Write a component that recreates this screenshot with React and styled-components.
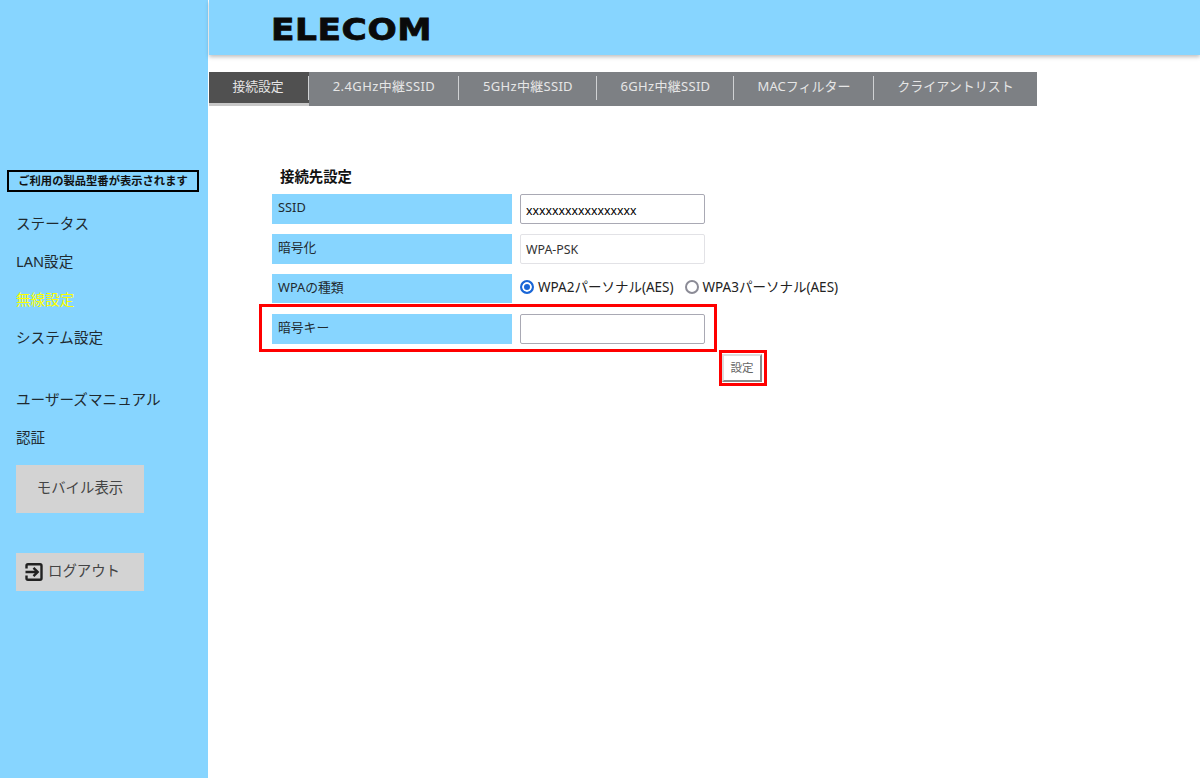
import React from "react";
import styled, { createGlobalStyle } from "styled-components";

const SKY = "#87d5ff";
const FONT = `"Noto Sans", "Noto Sans CJK JP", sans-serif`;

const GlobalStyle = createGlobalStyle`
  html, body {
    margin: 0;
    padding: 0;
    background: #fff;
    font-family: ${FONT};
  }
  * { box-sizing: border-box; }
`;

const tabs = [
  { label: "接続設定", width: 100, active: true },
  { label: "2.4GHz中継SSID", width: 150, spread: 0.4 },
  { label: "5GHz中継SSID", width: 138, spread: 0.3 },
  { label: "6GHz中継SSID", width: 137, spread: 0.3 },
  { label: "MACフィルター", width: 140 },
  { label: "クライアントリスト", width: 163, last: true },
];

function LogoutIcon() {
  return (
    <svg width="20" height="20" viewBox="0 0 20 20" fill="none" stroke="#222" strokeWidth="2.4">
      <path d="M2.500 6.500V3.800A1.500 1.500 0 0 1 4 2.300h12a1.500 1.500 0 0 1 1.500 1.500v12.400a1.500 1.500 0 0 1-1.500 1.500H4a1.500 1.500 0 0 1-1.500-1.500v-2.700" />
      <path d="M1.500 10h11.500M9.500 5.800 13.700 10l-4.200 4.200" />
    </svg>
  );
}

export default function App() {
  return (
    <Page>
      <GlobalStyle />
      <Sidebar>
        <ModelBox>ご利用の製品型番が表示されます</ModelBox>
        <NavList>
          <NavItem>ステータス</NavItem>
          <NavItem>LAN設定</NavItem>
          <NavItem $current>無線設定</NavItem>
          <NavItem>システム設定</NavItem>
        </NavList>
        <NavList $second>
          <NavItem>ユーザーズマニュアル</NavItem>
          <NavItem>認証</NavItem>
        </NavList>
        <MobileButton>モバイル表示</MobileButton>
        <LogoutButton>
          <LogoutIcon />
          <LogoutText>ログアウト</LogoutText>
        </LogoutButton>
      </Sidebar>

      <Main>
        <Header>
          <Logo>ELECOM</Logo>
        </Header>
        <TabBar>
          {tabs.map((tab) => (
            <Tab
              key={tab.label}
              $active={tab.active}
              $last={tab.last}
              $width={tab.width}
              $spread={tab.spread}
            >
              {tab.label}
            </Tab>
          ))}
        </TabBar>

        <Form>
          <FormTitle>接続先設定</FormTitle>
          <Row>
            <Label>SSID</Label>
            <TextInput defaultValue="xxxxxxxxxxxxxxxxx" />
          </Row>
          <Row>
            <Label>暗号化</Label>
            <ReadOnlyValue>WPA-PSK</ReadOnlyValue>
          </Row>
          <Row $short>
            <Label>WPAの種類</Label>
            <RadioGroup>
              <RadioDot $checked />
              <RadioText>WPA2パーソナル(AES)</RadioText>
              <RadioDot />
              <RadioText>WPA3パーソナル(AES)</RadioText>
            </RadioGroup>
          </Row>
          <Row>
            <Label>暗号キー</Label>
            <TextInput />
            <KeyHighlight />
          </Row>
          <SubmitRow>
            <SubmitButton>設定</SubmitButton>
            <SubmitHighlight />
          </SubmitRow>
        </Form>
      </Main>
    </Page>
  );
}

const Page = styled.div`
  display: flex;
  width: 1200px;
  height: 778px;
  overflow: hidden;
  background: #fff;
`;

const Sidebar = styled.aside`
  width: 208px;
  flex-shrink: 0;
  background: ${SKY};
  padding: 170px 0 0 16px;
  display: flex;
  flex-direction: column;
  align-items: flex-start;
`;

const ModelBox = styled.div`
  width: 192px;
  height: 22px;
  margin-left: -9px;
  border: 2px solid #000;
  font-size: 11.300px;
  font-weight: 700;
  line-height: 18px;
  text-align: center;
  white-space: nowrap;
  color: #111;
`;

const NavList = styled.div`
  margin-top: ${(p) => (p.$second ? "24px" : "12px")};
  display: flex;
  flex-direction: column;
`;

const NavItem = styled.div`
  height: 38px;
  line-height: 38px;
  font-size: 14.600px;
  white-space: nowrap;
  color: ${(p) => (p.$current ? "#ffff00" : "#1f2a30")};
`;

const MobileButton = styled.div`
  width: 128px;
  height: 48px;
  margin-top: 9px;
  background: #d3d3d3;
  color: #444;
  font-size: 14.400px;
  line-height: 46px;
  text-align: center;
`;

const LogoutButton = styled.div`
  width: 128px;
  height: 38px;
  margin-top: 40px;
  padding-left: 8px;
  background: #d3d3d3;
  color: #444;
  display: flex;
  align-items: center;
  gap: 4px;
`;

const LogoutText = styled.span`
  font-size: 14.400px;
  line-height: 35px;
  height: 38px;
`;

const Main = styled.main`
  flex: 1;
  min-width: 0;
  padding-left: 1px;
`;

const Header = styled.header`
  height: 55px;
  background: ${SKY};
  box-shadow: 0 2px 4px rgba(0, 0, 0, 0.25);
  padding-left: 62px;
  display: flex;
  align-items: center;
`;

const Logo = styled.div`
  font-family: "DejaVu Sans", sans-serif;
  font-size: 31px;
  font-weight: 700;
  line-height: 1;
  color: #0a0a0a;
  letter-spacing: 0.5px;
  -webkit-text-stroke: 0.8px #0a0a0a;
  transform: scale(1.11, 1);
  transform-origin: left center;
  margin-top: 3px;
`;

const TabBar = styled.nav`
  margin-top: 17px;
  width: 828px;
  height: 34px;
  display: flex;
  background: #7d8084;
`;

const Tab = styled.div`
  position: relative;
  width: ${(p) => p.$width}px;
  height: 34px;
  padding-right: ${(p) => (p.$active ? "2px" : "0")};
  background: ${(p) => (p.$active ? "#505050" : "transparent")};
  border-bottom: ${(p) => (p.$active ? "3px solid #c8c8c8" : "0")};
  color: #e6e6e6;
  font-size: ${(p) => (p.$active ? "12.800px" : "13px")};
  letter-spacing: ${(p) => p.$spread || 0}px;
  line-height: 29px;
  text-align: center;
  white-space: nowrap;

  &::after {
    content: "";
    display: ${(p) => (p.$last ? "none" : "block")};
    position: absolute;
    right: 0;
    top: 4px;
    height: 24px;
    width: 1px;
    background: #d0d2d4;
  }
`;

const Form = styled.section`
  position: relative;
  margin-top: 60px;
  padding-left: 63px;
`;

const FormTitle = styled.h2`
  margin: 0 0 7px 8px;
  height: 21px;
  font-size: 14.400px;
  font-weight: 700;
  line-height: 21px;
  color: #111;
`;

const Row = styled.div`
  position: relative;
  display: flex;
  align-items: flex-start;
  gap: 8px;
  height: ${(p) => (p.$short ? "29px" : "30px")};
  margin-bottom: ${(p) => (p.$short ? "11px" : "10px")};
`;

const Label = styled.div`
  width: 240px;
  height: 100%;
  padding-left: 6px;
  background: ${SKY};
  color: #1f2a30;
  font-size: 12.800px;
  line-height: 27px;
`;

const TextInput = styled.input`
  width: 185px;
  height: 30px;
  padding: 2px 5px 0;
  border: 1px solid #a9a9b4;
  border-radius: 2px;
  background: #fff;
  color: #000;
  font-family: ${FONT};
  font-size: 12.300px;
  outline: none;
`;

const ReadOnlyValue = styled.div`
  width: 185px;
  height: 30px;
  padding-left: 5px;
  border: 1px solid #e2e2e6;
  border-radius: 2px;
  color: #333;
  font-size: 12.400px;
  line-height: 29px;
`;

const RadioGroup = styled.div`
  display: flex;
  align-items: center;
  height: 26px;
`;

const RadioDot = styled.span`
  width: 14px;
  height: 14px;
  border-radius: 50%;
  border: 2px solid ${(p) => (p.$checked ? "#1a66d6" : "#8b8b96")};
  background: ${(p) => (p.$checked ? "#1a66d6" : "#fff")};
  box-shadow: ${(p) => (p.$checked ? "inset 0 0 0 2px #fff" : "none")};
  flex-shrink: 0;
`;

const RadioText = styled.span`
  margin: 0 11px 0 4px;
  font-size: 13.500px;
  line-height: 26px;
  height: 26px;
  color: #222;
  white-space: nowrap;
`;

const SubmitRow = styled.div`
  position: relative;
  width: 490px;
  display: flex;
  justify-content: flex-end;
`;

const SubmitButton = styled.div`
  width: 40px;
  height: 28px;
  border: 2px solid;
  border-color: #dcdcdc #8a8a8a #8a8a8a #dcdcdc;
  background: #fff;
  color: #666;
  font-size: 11.500px;
  line-height: 23px;
  text-align: center;
`;

const KeyHighlight = styled.div`
  position: absolute;
  left: -13px;
  top: -10px;
  width: 458px;
  height: 48px;
  border: 3px solid #f00;
  pointer-events: none;
`;

const SubmitHighlight = styled.div`
  position: absolute;
  right: -5px;
  top: -4px;
  width: 48px;
  height: 36px;
  border: 3px solid #f00;
  pointer-events: none;
`;
